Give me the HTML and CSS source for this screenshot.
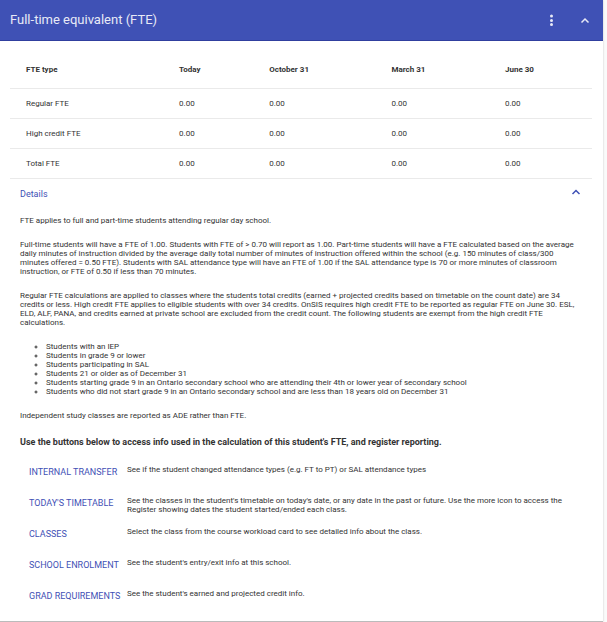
FILE: index.html
```html
<!DOCTYPE html>
<html lang="en">
<head>
<meta charset="utf-8">
<title>Full-time equivalent (FTE)</title>
<link rel="stylesheet" href="styles.css">
</head>
<body>
<main class="card">
  <header class="card-header">
    <h1>Full-time equivalent (FTE)</h1>
    <button class="icon-button" type="button" aria-label="More options">
      <svg width="12" height="12" viewBox="0 0 12 12" fill="currentColor"><circle cx="6.500" cy="2" r="1.5"/><circle cx="6.500" cy="6.500" r="1.5"/><circle cx="6.500" cy="10.500" r="1.5"/></svg>
    </button>
    <button class="icon-button" type="button" aria-label="Collapse card">
      <svg width="12" height="12" viewBox="0 0 12 12" fill="none" stroke="currentColor" stroke-width="1.5"><path d="M2.500 8.500L6 5L9.500 8.500"/></svg>
    </button>
  </header>
  <div class="card-body">
    <table class="fte-table">
      <colgroup><col class="col-type"><col class="col-today"><col class="col-october"><col class="col-march"><col></colgroup>
      <thead>
        <tr><th scope="col">FTE type</th><th scope="col">Today</th><th scope="col">October 31</th><th scope="col">March 31</th><th scope="col">June 30</th></tr>
      </thead>
      <tbody>
        <tr><td>Regular FTE</td><td>0.00</td><td>0.00</td><td>0.00</td><td>0.00</td></tr>
        <tr><td>High credit FTE</td><td>0.00</td><td>0.00</td><td>0.00</td><td>0.00</td></tr>
        <tr><td>Total FTE</td><td>0.00</td><td>0.00</td><td>0.00</td><td>0.00</td></tr>
      </tbody>
    </table>
    <section class="details">
      <button class="details-toggle" type="button" aria-expanded="true">
        <span>Details</span>
        <svg width="12" height="12" viewBox="0 0 12 12" fill="none" stroke="currentColor" stroke-width="1.5"><path d="M2.500 6L6 2.500L9.500 6"/></svg>
      </button>
      <p>FTE applies to full and part-time students attending regular day school.</p>
      <p>Full-time students will have a FTE of 1.00. Students with FTE of &gt; 0.70 will report as 1.00. Part-time students will have a FTE calculated based on the average daily minutes of instruction divided by the average daily total number of minutes of instruction offered within the school (e.g. 150 minutes of class/300 minutes offered = 0.50 FTE). Students with SAL attendance type will have an FTE of 1.00 if the SAL attendance type is 70 or more minutes of classroom instruction, or FTE of 0.50 if less than 70 minutes.</p>
      <p>Regular FTE calculations are applied to classes where the students total credits (earned + projected credits based on timetable on the count date) are 34 credits or less. High credit FTE applies to eligible students with over 34 credits. OnSIS requires high credit FTE to be reported as regular FTE on June 30. ESL, ELD, ALF, PANA, and credits earned at private school are excluded from the credit count. The following students are exempt from the high credit FTE calculations.</p>
      <ul class="exemptions">
        <li>Students with an IEP</li>
        <li>Students in grade 9 or lower</li>
        <li>Students participating in SAL</li>
        <li>Students 21 or older as of December 31</li>
        <li>Students starting grade 9 in an Ontario secondary school who are attending their 4th or lower year of secondary school</li>
        <li>Students who did not start grade 9 in an Ontario secondary school and are less than 18 years old on December 31</li>
      </ul>
      <p>Independent study classes are reported as ADE rather than FTE.</p>
      <h2>Use the buttons below to access info used in the calculation of this student's FTE, and register reporting.</h2>
      <div class="actions">
        <div class="action"><button type="button">INTERNAL TRANSFER</button><span>See if the student changed attendance types (e.g. FT to PT) or SAL attendance types</span></div>
        <div class="action"><button type="button">TODAY'S TIMETABLE</button><span>See the classes in the student's timetable on today's date, or any date in the past or future. Use the more icon to access the Register showing dates the student started/ended each class.</span></div>
        <div class="action"><button type="button">CLASSES</button><span>Select the class from the course workload card to see detailed info about the class.</span></div>
        <div class="action"><button type="button">SCHOOL ENROLMENT</button><span>See the student's entry/exit info at this school.</span></div>
        <div class="action"><button type="button">GRAD REQUIREMENTS</button><span>See the student's earned and projected credit info.</span></div>
      </div>
    </section>
  </div>
</main>
</body>
</html>
```
FILE: styles.css
```css
* {
  box-sizing: border-box;
}

body {
  margin: 0;
  padding-right: 4px;
  background: #fafafa;
  color: #333;
  font: 8px/9px Roboto, sans-serif;
}

button {
  padding: 0;
  border: 0;
  background: none;
  color: inherit;
  font: inherit;
  cursor: pointer;
}

svg {
  display: block;
}

.card {
  background: #fff;
  border-bottom: 1px solid #bbb;
  box-shadow: 0 0 2px rgba(0, 0, 0, 0.2);
}

.card-header {
  display: flex;
  align-items: center;
  gap: 22px;
  height: 41px;
  padding: 0 12px 0 10px;
  border-bottom: 1px solid #303f9f;
  background: #3f51b5;
  color: #e8eaf6;
}

.card-header h1 {
  flex: 1;
  margin: 0;
  font-size: 13px;
  font-weight: 400;
  line-height: 16px;
}

.card-body {
  padding: 10px 11px 14px 10px;
}

.fte-table {
  width: 100%;
  border-collapse: collapse;
  table-layout: fixed;
}

.col-type {
  width: 27.500%;
}

.col-today {
  width: 15.500%;
}

.col-october {
  width: 21%;
}

.col-march {
  width: 19.500%;
}

.fte-table th,
.fte-table td {
  height: 30px;
  padding: 0 0 0 9px;
  border-bottom: 1px solid #eaeaea;
  text-align: left;
}

.fte-table th {
  height: 37px;
  font-weight: 700;
}

.fte-table th:first-child,
.fte-table td:first-child {
  padding-left: 16px;
}

.details {
  padding: 0 10px;
}

.details-toggle {
  display: flex;
  align-items: center;
  justify-content: space-between;
  width: 100%;
  height: 31px;
  margin-bottom: 6px;
  color: #3f51b5;
  font-size: 9px;
}

.details p {
  margin: 0 0 15px;
}

.exemptions {
  margin: 0 0 15px;
  padding-left: 26px;
  list-style: circle;
}

.details h2 {
  margin: 16px 0 17px;
  font-size: 9px;
  font-weight: 700;
  line-height: 12px;
}

.actions {
  display: grid;
  gap: 13px;
  padding-left: 9px;
}

.action {
  display: grid;
  grid-template-columns: 98px 1fr;
  align-items: start;
  min-height: 18px;
}

.action button {
  padding-top: 3px;
  color: #3f51b5;
  font-size: 9px;
  text-align: left;
  white-space: nowrap;
}
```
